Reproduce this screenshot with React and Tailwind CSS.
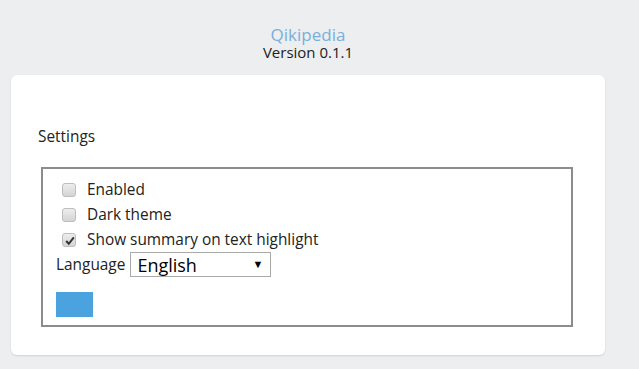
import React from "react";

function Box({ checked }) {
  return (
    <span className="relative inline-block w-[14px] h-[14px] rounded-[3px] border border-[#bdbdbd] bg-gradient-to-b from-[#ededed] to-[#d4d4d4] shrink-0">
      {checked && (
        <svg viewBox="0 0 14 14" className="absolute inset-0 w-[14px] h-[14px]">
          <path d="M3.2 7 L5.8 9.8 L10.8 3.4" fill="none" stroke="#333" strokeWidth="2" />
        </svg>
      )}
    </span>
  );
}

export default function App() {
  const font = { fontFamily: '"Open Sans", "Noto Sans", sans-serif' };
  return (
    <div className="w-[639px] h-[369px] bg-[#eceeef] overflow-hidden" style={font}>
      <div className="ml-[11px] w-[594px] flex flex-col items-center pt-[25px]">
        <div className="text-[17px] leading-[20px] text-[#7aaedc]">Qikipedia</div>
        <div className="text-[15px] leading-[15px] text-[#222]">Version 0.1.1</div>
      </div>
      <div className="ml-[11px] mt-[15px] w-[594px] h-[280px] bg-white rounded-[6px] shadow-[0_1px_2px_rgba(0,0,0,0.12)] pt-[52px] px-[30px]">
        <div className="text-[15.4px] leading-[20px] text-[#222] ml-[-3px]">Settings</div>
        <div className="mt-[20px] w-[532px] h-[160px] border-2 border-[#8c8c8c] pl-[13px] pt-[8px] text-[15.4px] text-[#222]">
          <div className="flex flex-col">
            <label className="flex items-center gap-[11px] h-[25px] pl-[6px]"><Box /><span>Enabled</span></label>
            <label className="flex items-center gap-[11px] h-[25px] pl-[6px]"><Box /><span>Dark theme</span></label>
            <label className="flex items-center gap-[11px] h-[25px] pl-[6px]"><Box checked /><span>Show summary on text highlight</span></label>
            <div className="flex items-center gap-[5px] h-[25px]">
              <span>Language</span>
              <div className="flex items-center justify-between w-[141px] h-[25px] border border-[#a9a9a9] pl-[6px] pr-[7px]">
                <span className="text-[18px] leading-[22px] text-black">English</span>
                <span className="text-[11px] text-black">▼</span>
              </div>
            </div>
            <div className="mt-[15px] w-[37px] h-[25px] bg-[#4aa3df]"></div>
          </div>
        </div>
      </div>
    </div>
  );
}
